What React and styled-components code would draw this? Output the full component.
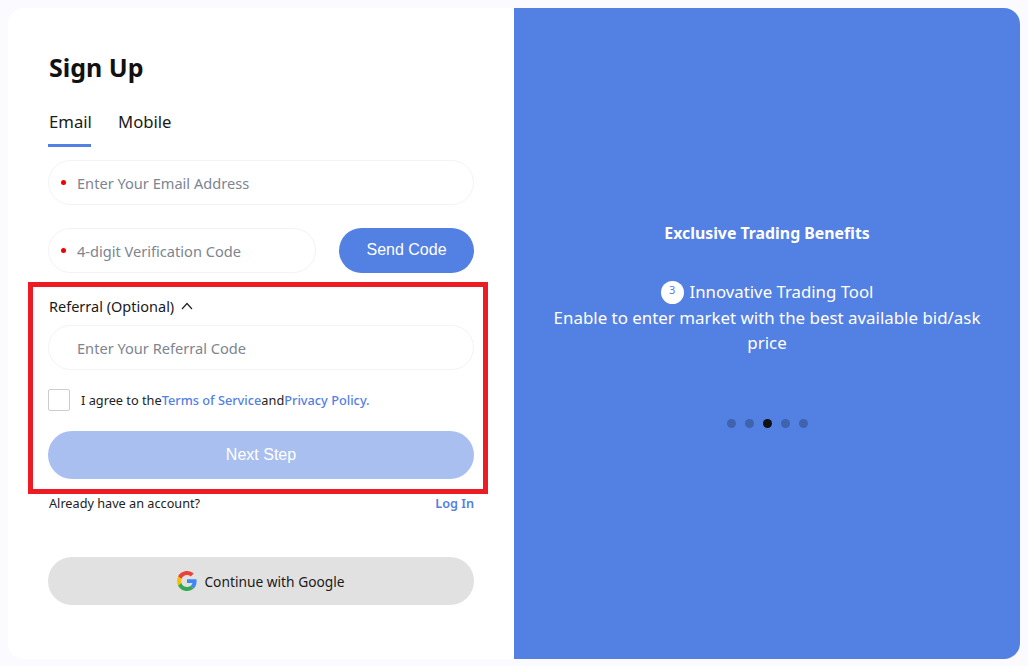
import React from 'react';
import styled, { createGlobalStyle } from 'styled-components';

const Global = createGlobalStyle`
  * { box-sizing: border-box; }
  html, body { margin: 0; padding: 0; }
  body { background: #fbfaff; font-family: "Noto Sans", "Open Sans", sans-serif; color: #111; }
`;
const Page = styled.div`
  width: 1028px; height: 666px; padding: 8px; overflow: hidden;
`;
const Card = styled.main`
  position: relative; display: flex; width: 1012px; height: 651px;
  background: #fff; border-radius: 16px;
`;
const Left = styled.section`
  width: 506px; padding: 41px 32px 0 40px; display: flex; flex-direction: column;
`;
const Title = styled.h1`
  margin: 0 0 0 1px; font-size: 25px; line-height: 36px; font-weight: 700; color: #111;
`;
const Tabs = styled.div`
  display: flex; gap: 26px; margin-top: 19px;
`;
const Tab = styled.div`
  height: 43px; padding: 6px 0 0 1px; width: ${p => p.$w}; font-size: 16.7px; line-height: 24px; color: #1a1a1a;
  border-bottom: 3px solid ${p => (p.$active ? '#5380e3' : 'transparent')};
`;
const Field = styled.div`
  display: flex; align-items: center; height: 45px; width: ${p => p.$w || '426px'};
  padding-left: 12px; border: 1px solid #f3f3f5; border-radius: 23px;
  font-size: 14.6px; color: #7d8590; margin-top: ${p => p.$mt || 0}px;
`;
const Required = styled.span`
  width: 5px; height: 5px; border-radius: 50%; background: #f00000; margin-right: 11px;
  flex: none;
`;
const Spacer = styled.span`
  width: 16px; flex: none;
`;
const CodeRow = styled.div`
  display: flex; justify-content: space-between; margin-top: 23px; width: 426px;
`;
const SendButton = styled.button`
  width: 135px; height: 45px; border: 0; border-radius: 23px; padding: 0 0 2px; background: #5380e3; color: #fff;
  font: 16px "Liberation Sans", Arial, sans-serif;
`;
const ReferralToggle = styled.div`
  display: flex; align-items: center; gap: 7px; margin-top: 22px; padding-left: 1px; height: 22px;
  font-size: 14.5px; color: #1a1a1a;
`;
const Agree = styled.div`
  display: flex; align-items: center; margin-top: 19px; height: 22px; font-size: 12.75px; color: #222;
`;
const Box = styled.span`
  width: 22px; height: 22px; border: 1px solid #ccc; border-radius: 2px; margin-right: 11px; flex: none;
`;
const Link = styled.a`
  color: #5380e3; font-weight: ${p => p.$bold ? 600 : 500};
`;
const NextButton = styled.button`
  width: 426px; height: 48px; border: 0; border-radius: 24px; margin-top: 20px;
  background: #a9bfef; color: #fff; font: 16px "Liberation Sans", Arial, sans-serif;
`;
const LoginRow = styled.div`
  display: flex; justify-content: space-between; align-items: center; width: 426px; height: 20px;
  margin-top: 14px; padding-left: 1px; font-size: 12.7px; color: #222;
`;
const GoogleButton = styled.button`
  display: flex; align-items: center; justify-content: center; gap: 7px;
  width: 426px; height: 48px; border: 0; border-radius: 24px; margin-top: 44px;
  background: #e1e1e1; color: #1a1a1a; font: 13.75px "Noto Sans", sans-serif;
`;
const Right = styled.aside`
  width: 506px; background: #5380e3; border-radius: 0 16px 16px 0; color: #fff;
  display: flex; flex-direction: column; align-items: center; padding: 213px 30px 0; text-align: center;
`;
const Benefit = styled.h2`
  margin: 0; font-size: 15.85px; line-height: 24px; font-weight: 700;
`;
const Feature = styled.div`
  display: flex; align-items: center; gap: 6px; margin-top: 34px; font-size: 16.8px; line-height: 26px;
`;
const Badge = styled.span`
  width: 23px; height: 23px; border-radius: 50%; background: #fff; color: #5380e3;
  font-size: 11px; line-height: 18px; text-align: center; flex: none;
`;
const Desc = styled.p`
  margin: 0; font-size: 16.9px; line-height: 25px; width: 446px;
`;
const Dots = styled.div`
  display: flex; gap: 9px; margin-top: 64px;
`;
const Dot = styled.span`
  width: 9px; height: 9px; border-radius: 50%;
  background: ${p => (p.$active ? '#111' : '#3f63ad')};
`;
const Annotation = styled.div`
  position: absolute; left: 20px; top: 274px; width: 460px; height: 212px;
  border: 5px solid #ed1c24; pointer-events: none;
`;

const Chevron = () => (
  <svg width="12" height="8" viewBox="0 0 12 8" fill="none" stroke="#222" strokeWidth="1.2">
    <path d="M1 7l5-5.5L11 7" />
  </svg>
);
const GoogleIcon = () => (
  <svg width="20" height="20" viewBox="0 0 48 48">
    <path fill="#EA4335" d="M24 9.5c3.54 0 6.71 1.22 9.21 3.6l6.85-6.85C35.9 2.38 30.47 0 24 0 14.62 0 6.51 5.38 2.56 13.22l7.98 6.19C12.43 13.72 17.74 9.5 24 9.5z" />
    <path fill="#4285F4" d="M46.98 24.55c0-1.57-.15-3.09-.38-4.55H24v9.02h12.94c-.58 2.96-2.26 5.48-4.78 7.18l7.73 6c4.51-4.18 7.09-10.36 7.09-17.65z" />
    <path fill="#FBBC05" d="M10.53 28.59c-.48-1.45-.76-2.99-.76-4.59s.27-3.14.76-4.59l-7.98-6.19C.92 16.46 0 20.12 0 24c0 3.88.92 7.54 2.56 10.78l7.97-6.19z" />
    <path fill="#34A853" d="M24 48c6.48 0 11.93-2.13 15.89-5.81l-7.73-6c-2.15 1.45-4.92 2.3-8.16 2.3-6.26 0-11.57-4.22-13.47-9.91l-7.98 6.19C6.51 42.62 14.62 48 24 48z" />
  </svg>
);

export default function App() {
  return (
    <Page>
      <Global />
      <Card>
        <Left>
          <Title>Sign Up</Title>
          <Tabs>
            <Tab $active $w="43px">Email</Tab>
            <Tab>Mobile</Tab>
          </Tabs>
          <Field $mt={13}><Required />Enter Your Email Address</Field>
          <CodeRow>
            <Field $w="268px"><Required />4-digit Verification Code</Field>
            <SendButton>Send Code</SendButton>
          </CodeRow>
          <ReferralToggle>Referral (Optional) <Chevron /></ReferralToggle>
          <Field $mt={8}><Spacer />Enter Your Referral Code</Field>
          <Agree>
            <Box />
            <span>I agree to the<Link>Terms of Service</Link>and<Link>Privacy Policy.</Link></span>
          </Agree>
          <NextButton>Next Step</NextButton>
          <LoginRow>
            <span>Already have an account?</span>
            <Link $bold>Log In</Link>
          </LoginRow>
          <GoogleButton><GoogleIcon />Continue with Google</GoogleButton>
        </Left>
        <Right>
          <Benefit>Exclusive Trading Benefits</Benefit>
          <Feature><Badge>3</Badge>Innovative Trading Tool</Feature>
          <Desc>Enable to enter market with the best available bid/ask price</Desc>
          <Dots>
            <Dot /><Dot /><Dot $active /><Dot /><Dot />
          </Dots>
        </Right>
        <Annotation />
      </Card>
    </Page>
  );
}
